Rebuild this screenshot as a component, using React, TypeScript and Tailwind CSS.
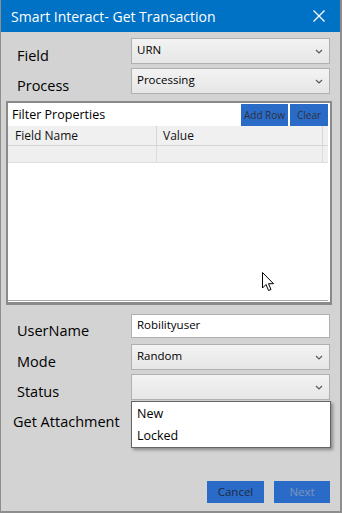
import React from 'react';

const Chevron = () => (
  <svg width="8" height="5" viewBox="0 0 8 5" className="shrink-0">
    <polyline points="1,1 4,4 7,1" fill="none" stroke="#5a5a5a" strokeWidth="1.2" />
  </svg>
);

const Combo = ({ value }: { value?: string }) => (
  <div className="w-[199px] h-[26px] border border-[#b0b0b0] bg-linear-to-b from-[#f3f3f3] to-[#e6e6e6] flex items-center justify-between pl-[5px] pr-[6px] pb-[3px]">
    <span className="text-[11.5px] text-black">{value}</span>
    <span className="pt-[3px]"><Chevron /></span>
  </div>
);

const FormRow = ({ label, children, indent = 'pl-[16px]', mt }: { label: string; children?: React.ReactNode; indent?: string; mt: string }) => (
  <div className={`flex ${mt}`}>
    <div className={`w-[130px] h-[26px] ${indent} pt-[9px] flex items-center text-[14.5px] text-black`}>{label}</div>
    {children}
  </div>
);

const App = () => {
  return (
    <div
      className="w-[342px] h-[513px] bg-[#d3d3d3] border-l border-r-2 border-b-2 border-[#8e8e8e] flex flex-col relative overflow-hidden"
      style={{ fontFamily: '"Open Sans", "Noto Sans", sans-serif' }}
    >
      {/* title bar */}
      <div className="h-[32px] shrink-0 bg-[#0072c6] flex items-center justify-between pl-[10px] pr-[15px]">
        <span className="text-white text-[14px]">Smart Interact- Get Transaction</span>
        <svg width="12" height="12" viewBox="0 0 12 12">
          <path d="M0.5 0.5 L11.5 11.5 M11.5 0.5 L0.5 11.5" stroke="#fff" strokeWidth="1.3" />
        </svg>
      </div>

      <FormRow label="Field" mt="mt-[6px]">
        <Combo value="URN" />
      </FormRow>
      <FormRow label="Process" mt="mt-[4px]">
        <Combo value="Processing" />
      </FormRow>

      {/* filter properties group */}
      <div className="mt-[7px] ml-[5px] w-[326px] h-[204px] border-2 border-b-[3px] border-[#8a8a8a] bg-white flex flex-col">
        <div className="h-[23px] flex items-stretch pt-[1px] pr-[2px]">
          <div className="flex-1 pl-[4px] flex items-center text-[12.5px] text-black">Filter Properties</div>
          <div className="w-[47px] bg-[#2b6bc8] flex items-center justify-center pt-[1px] text-[10px] text-[#2d3138]">Add Row</div>
          <div className="w-[38px] ml-[2px] bg-[#2b6bc8] flex items-center justify-center pt-[1px] text-[10px] text-[#2d3138]">Clear</div>
        </div>
        <div className="flex-1 mr-[2px] mb-[1px] border-b border-[#a8a8a8] flex flex-col">
          <div className="h-[20px] flex bg-[#f0f0f0] border-b border-[#d6d6d6] text-[12px] text-[#111]">
            <div className="w-[149px] pl-[7px] pt-[1px] flex items-center border-r border-[#d6d6d6]">Field Name</div>
            <div className="w-[166px] pl-[6px] pt-[1px] flex items-center border-r border-[#d6d6d6]">Value</div>
            <div className="flex-1" />
          </div>
          <div className="h-[17px] flex bg-[#efefef] border-b border-[#dedede]">
            <div className="w-[149px] border-r border-[#dcdcdc]" />
            <div className="w-[166px] border-r border-[#dcdcdc]" />
            <div className="flex-1" />
          </div>
        </div>
      </div>

      <div className="flex mt-[9px]">
        <div className="w-[130px] h-[24px] pl-[16px] pt-[9px] flex items-center text-[14.5px] text-black">UserName</div>
        <div className="w-[199px] h-[24px] bg-white border border-[#b0b0b0] pl-[5px] pb-[3px] flex items-center text-[11.5px] text-black">Robilityuser</div>
      </div>
      <FormRow label="Mode" mt="mt-[6px]">
        <Combo value="Random" />
      </FormRow>
      <FormRow label="Status" mt="mt-[4px]">
        <Combo />
      </FormRow>
      <FormRow label="Get Attachment" indent="pl-[12px]" mt="mt-[4px]" />

      <div className="mt-auto mb-[8px] pr-[10px] flex justify-end gap-[10px]">
        <div className="w-[57px] h-[22px] bg-[#2b6bc8] flex items-center justify-center text-[11.5px] text-[#1e2a40]">Cancel</div>
        <div className="w-[56px] h-[22px] bg-[#2b6bc8] flex items-center justify-center text-[11.5px] text-[#7d95bd]">Next</div>
      </div>

      {/* open status dropdown */}
      <div className="absolute left-[130px] top-[401px] w-[200px] h-[47px] bg-white border border-[#646464] shadow-[2px_2px_3px_rgba(0,0,0,0.35)] flex flex-col pl-[5px] pt-[2px] text-[12.5px] text-black">
        <div className="h-[22px] flex items-center">New</div>
        <div className="h-[22px] flex items-center">Locked</div>
      </div>

      {/* mouse cursor */}
      <svg className="absolute left-[261px] top-[272px]" width="13" height="21" viewBox="0 0 13 21">
        <path d="M0.5 0.5 L0.5 16 L4 12.5 L6.5 18.5 L9 17.5 L6.5 11.7 L11.5 11.7 Z" fill="#fff" stroke="#000" strokeWidth="1" strokeLinejoin="miter" />
      </svg>
    </div>
  );
};

export default App;
